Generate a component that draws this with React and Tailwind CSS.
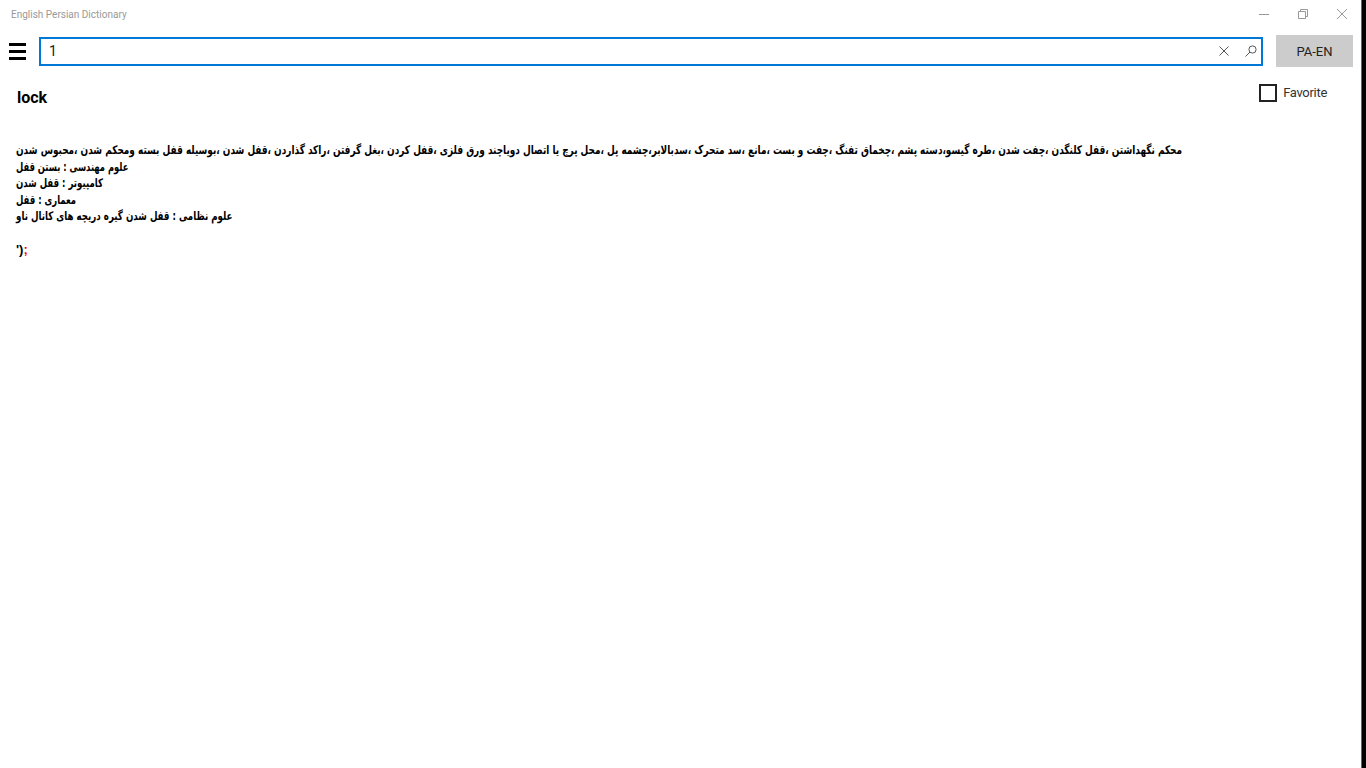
import React from "react";

const font = "font-['Roboto','Open_Sans',sans-serif]";

export default function App() {
  return (
    <div className={`w-[1366px] h-[768px] overflow-hidden bg-white flex ${font}`}>
      <div className="w-[1361px] flex flex-col">
        <div className="h-[28px] flex items-center justify-between">
          <span className="ml-[11px] text-[10px] text-[#999]">English Persian Dictionary</span>
          <div className="flex items-center">
            <div className="w-[39px] flex justify-center">
              <svg width="10" height="10" viewBox="0 0 10 10"><path d="M0 5.5H10" stroke="#999" /></svg>
            </div>
            <div className="w-[39px] flex justify-center">
              <svg width="10" height="10" viewBox="0 0 10 10" fill="none" stroke="#999"><path d="M.5 2.5h7v7h-7zM2.5 2.5V.5h7v7h-2" /></svg>
            </div>
            <div className="w-[39px] flex justify-center">
              <svg width="10" height="10" viewBox="0 0 10 10" fill="none" stroke="#999"><path d="M0 0L10 10M10 0L0 10" /></svg>
            </div>
          </div>
        </div>
        <div className="h-[32px] mt-[7px] flex items-center">
          <div className="ml-[9px] w-[17px] flex flex-col gap-[4px]">
            <div className="h-[3px] bg-black" />
            <div className="h-[3px] bg-black" />
            <div className="h-[3px] bg-black" />
          </div>
          <div className="ml-[13px] w-[1224px] h-[29px] border-2 border-[#0078d7] flex items-center">
            <span className="ml-[8px] text-[14px] text-[#222] flex-1">1</span>
            <svg className="mr-[16px]" width="10" height="10" viewBox="0 0 10 10" fill="none" stroke="#555"><path d="M0.5 0.5L9.5 9.5M9.5 0.5L0.5 9.5" /></svg>
            <svg className="mr-[4px]" width="12" height="12" viewBox="0 0 12 12" fill="none" stroke="#555"><circle cx="7.5" cy="4.5" r="3.6" /><path d="M5 7L0.5 11.5" /></svg>
          </div>
          <div className="ml-[13px] w-[77px] h-[32px] pt-[1px] bg-[#cccccc] flex items-center justify-center text-[13px] text-[#222]">PA-EN</div>
        </div>
        <div className="flex justify-between mt-[16px]">
          <h1 className="ml-[17px] mt-[3px] text-[16px] font-bold text-black leading-[24px]">lock</h1>
          <div className="mr-[34px] mt-[1px] self-start flex items-center gap-[6px]">
            <div className="w-[18px] h-[18px] border-2 border-[#222]" />
            <span className="text-[13px] tracking-[-0.3px] leading-[18px] text-[#333]">Favorite</span>
          </div>
        </div>
        <div className="ml-[16px] mt-[32px] text-[12px] leading-[16.6px] font-bold text-black font-['DejaVu_Sans',sans-serif] whitespace-nowrap">
          <p dir="rtl" className="w-fit origin-left scale-x-[0.743]">محکم نگهداشتن ،قفل کلنگدن ،چفت شدن ،طره گیسو،دسته پشم ،چخماق تفنگ ،چفت و بست ،مانع ،سد متحرک ،سدبالابر،چشمه پل ،محل پرچ یا اتصال دویاچند ورق فلزی ،قفل کردن ،بغل گرفتن ،راکد گذاردن ،قفل شدن ،بوسیله قفل بسته ومحکم شدن ،محبوس شدن</p>
          <p dir="rtl" className="w-fit origin-left scale-x-[0.695]">علوم مهندسی : بستن قفل</p>
          <p dir="rtl" className="w-fit origin-left scale-x-[0.714]">کامپیوتر : قفل شدن</p>
          <p dir="rtl" className="w-fit origin-left scale-x-[0.706]">معماری : قفل</p>
          <p dir="rtl" className="w-fit origin-left scale-x-[0.723]">علوم نظامی : قفل شدن گیره دریچه های کانال ناو</p>
          <p className="mt-[17px] font-['Liberation_Sans',sans-serif] text-[13px]">'<span>)</span><span className="text-[#ff0000]">;</span></p>
        </div>
      </div>
      <div className="w-[5px] bg-black border-l border-[#666]" />
    </div>
  );
}
